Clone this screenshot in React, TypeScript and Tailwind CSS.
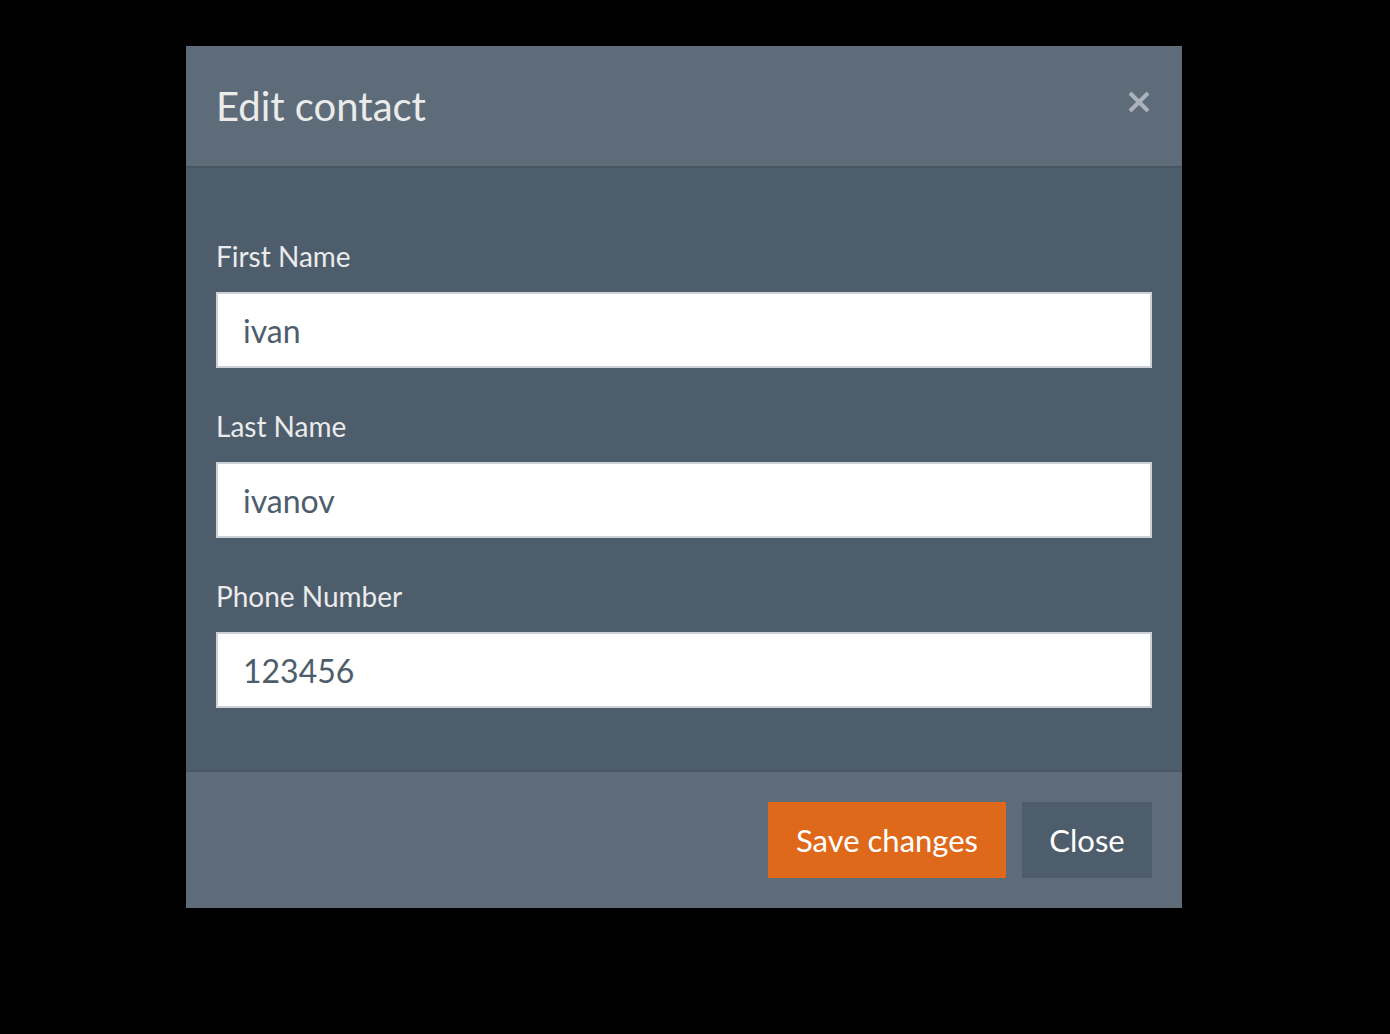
import { useState } from 'react';

function Field({ label, value }: { label: string; value: string }) {
  const [val, setVal] = useState(value);
  return (
    <div className="flex flex-col">
      <label className="text-[28px] leading-[39px] text-[#ebebeb] mb-[16px]">{label}</label>
      <input
        className="h-[76px] w-full bg-white border-2 border-[#cdd2d9] px-[25px] text-[32px] text-[#4e5d6c] outline-none"
        style={{ fontFamily: 'Lato, sans-serif' }}
        value={val}
        onChange={(e) => setVal(e.target.value)}
      />
    </div>
  );
}

export default function App() {
  return (
    <div className="min-h-screen bg-black pt-[46px] pl-[186px]" style={{ fontFamily: 'Lato, sans-serif' }}>
      <div className="w-[996px] bg-[#4e5d6c]">
        {/* Header */}
        <div className="h-[122px] flex items-center justify-between pl-[30px] pr-[32px] bg-[#5e6b79] border-b-2 border-[#4a5562]">
          <h4 className="text-[40px] text-[#ebebeb] leading-none">Edit contact</h4>
          <button className="text-[#aab2bb] -mt-[8px]">
            <svg width="22" height="22" viewBox="0 0 22 22" fill="none" stroke="currentColor" strokeWidth="4">
              <path d="M2 2 L20 20 M20 2 L2 20" />
            </svg>
          </button>
        </div>

        {/* Body */}
        <div className="px-[30px] pt-[69px] pb-[62px] flex flex-col gap-[39px]">
          <Field label="First Name" value="ivan" />
          <Field label="Last Name" value="ivanov" />
          <Field label="Phone Number" value="123456" />
        </div>

        {/* Footer */}
        <div className="h-[138px] bg-[#5e6b79] border-t-2 border-[#4a5562] flex items-center justify-end gap-[16px] px-[30px]">
          <button className="h-[76px] w-[238px] bg-[#df691a] text-white text-[31px]">Save changes</button>
          <button className="h-[76px] w-[130px] bg-[#4e5d6c] text-white text-[31px]">Close</button>
        </div>
      </div>
    </div>
  );
}
